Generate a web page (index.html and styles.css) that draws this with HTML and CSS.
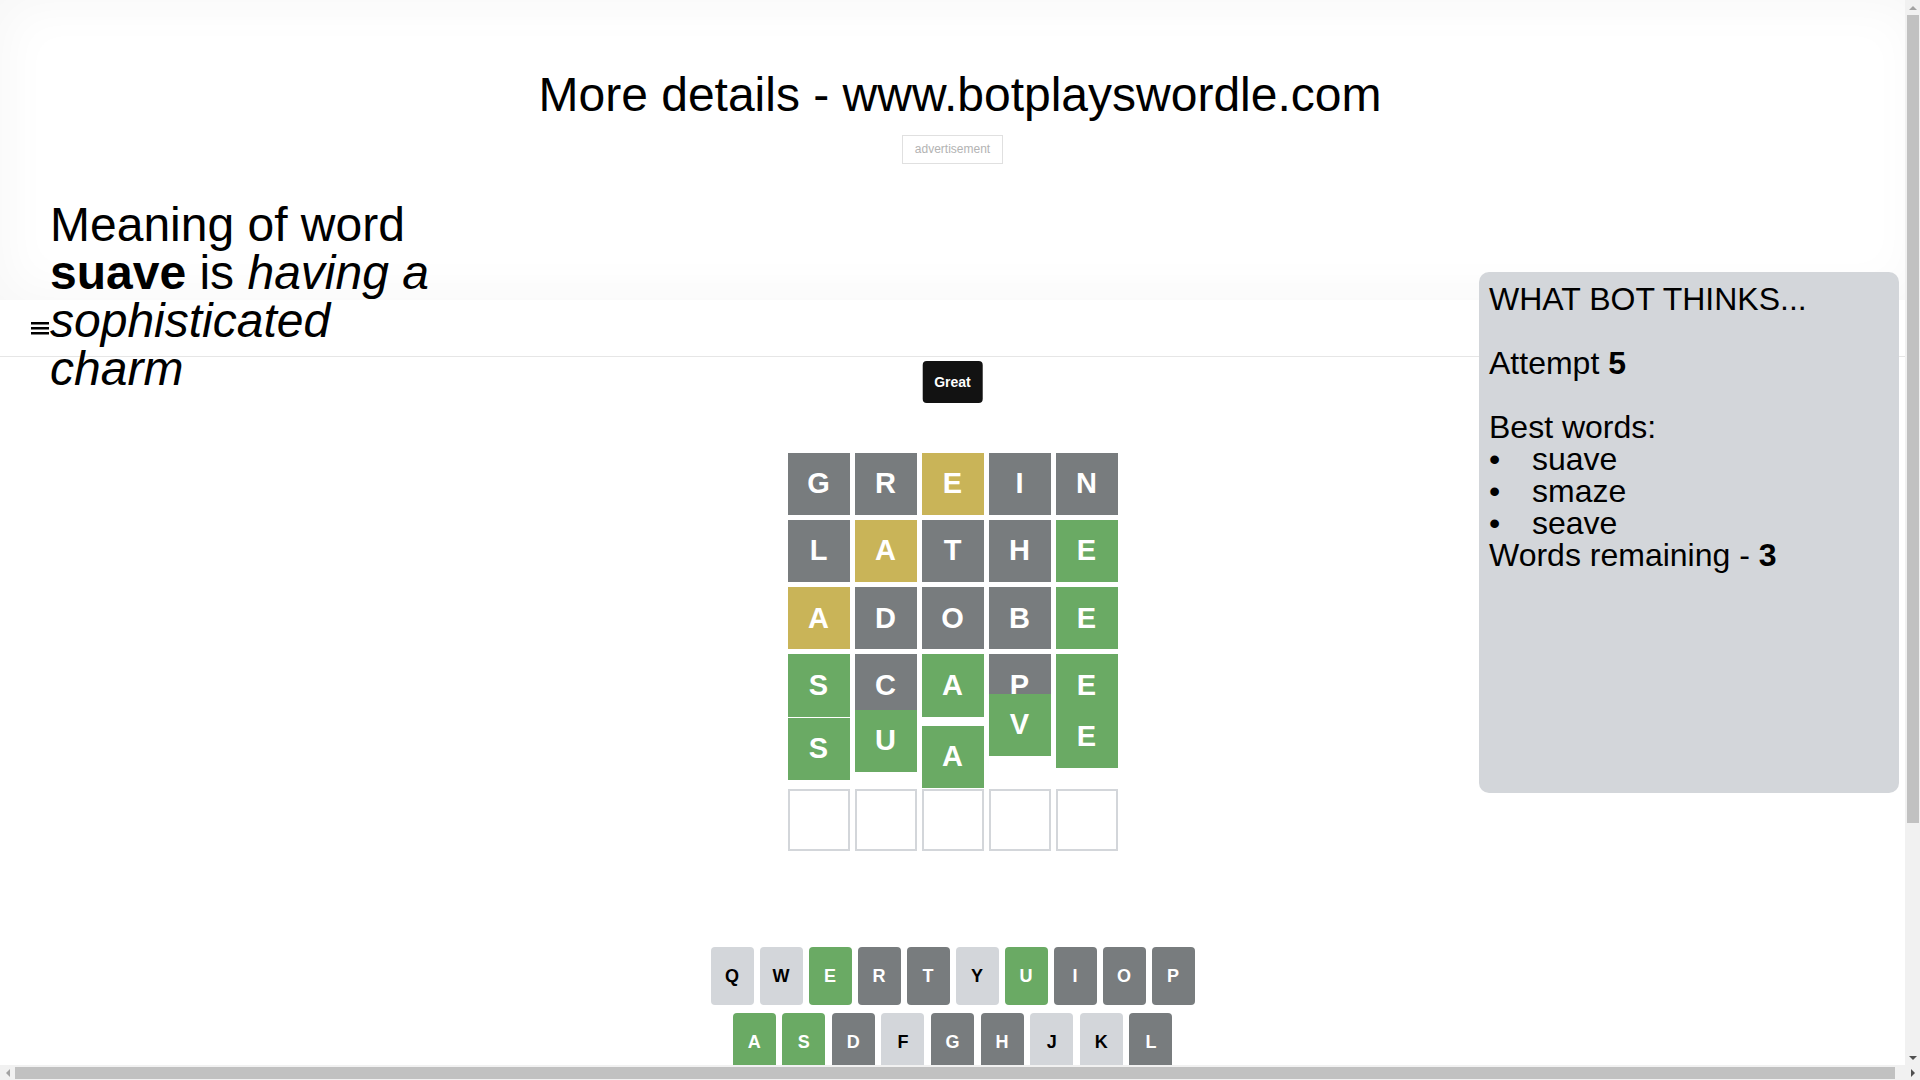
FILE: index.html
```html
<!DOCTYPE html>
<html lang="en">
<head>
  <meta charset="UTF-8">
  <title>Bot plays Wordle</title>
  <meta name="viewport" content="width=device-width, initial-scale=1.0">
  <link rel="stylesheet" href="styles.css">
</head>
<body>

  <div class="app">

    <div class="promo">
      <h1 class="promo-title">More details - www.botplayswordle.com</h1>
      <div class="ad-row"><span class="ad-label">advertisement</span></div>
    </div>

    <div class="meaning">
      Meaning of word <strong>suave</strong> is <em>having a sophisticated charm</em>
    </div>

    <header class="top-bar">
      <svg class="menu-icon" viewBox="0 0 18 13" aria-hidden="true">
        <rect x="0" y="0" width="18" height="2.5"/>
        <rect x="0" y="5" width="18" height="2.5"/>
        <rect x="0" y="10" width="18" height="2.5"/>
      </svg>
    </header>

    <div class="game">
      <div class="toast">Great</div>

      <div class="board-wrap">
        <div class="board">
          <div class="board-row">
            <div class="tile absent">G</div>
            <div class="tile absent">R</div>
            <div class="tile present">E</div>
            <div class="tile absent">I</div>
            <div class="tile absent">N</div>
          </div>
          <div class="board-row">
            <div class="tile absent">L</div>
            <div class="tile present">A</div>
            <div class="tile absent">T</div>
            <div class="tile absent">H</div>
            <div class="tile correct">E</div>
          </div>
          <div class="board-row">
            <div class="tile present">A</div>
            <div class="tile absent">D</div>
            <div class="tile absent">O</div>
            <div class="tile absent">B</div>
            <div class="tile correct">E</div>
          </div>
          <div class="board-row">
            <div class="tile correct">S</div>
            <div class="tile absent">C</div>
            <div class="tile correct">A</div>
            <div class="tile absent">P</div>
            <div class="tile correct">E</div>
          </div>
          <!-- last guess is mid-bounce -->
          <div class="board-row">
            <div class="tile correct" style="transform: translateY(-4px)">S</div>
            <div class="tile correct" style="transform: translateY(-12px)">U</div>
            <div class="tile correct" style="transform: translateY(4px)">A</div>
            <div class="tile correct" style="transform: translateY(-28px)">V</div>
            <div class="tile correct" style="transform: translateY(-16px)">E</div>
          </div>
          <div class="board-row">
            <div class="tile empty"></div>
            <div class="tile empty"></div>
            <div class="tile empty"></div>
            <div class="tile empty"></div>
            <div class="tile empty"></div>
          </div>
        </div>
      </div>

      <div class="keyboard">
        <div class="key-row">
          <div class="key">Q</div>
          <div class="key">W</div>
          <div class="key correct">E</div>
          <div class="key absent">R</div>
          <div class="key absent">T</div>
          <div class="key">Y</div>
          <div class="key correct">U</div>
          <div class="key absent">I</div>
          <div class="key absent">O</div>
          <div class="key absent">P</div>
        </div>
        <div class="key-row middle">
          <div class="key correct">A</div>
          <div class="key correct">S</div>
          <div class="key absent">D</div>
          <div class="key">F</div>
          <div class="key absent">G</div>
          <div class="key absent">H</div>
          <div class="key">J</div>
          <div class="key">K</div>
          <div class="key absent">L</div>
        </div>
        <div class="key-row">
          <div class="key wide">ENTER</div>
          <div class="key">Z</div>
          <div class="key">X</div>
          <div class="key absent">C</div>
          <div class="key correct">V</div>
          <div class="key absent">B</div>
          <div class="key absent">N</div>
          <div class="key">M</div>
          <div class="key wide">⌫</div>
        </div>
      </div>
    </div>

    <div class="bot-panel">
      WHAT BOT THINKS...<br><br>
      Attempt <b>5</b><br><br>
      Best words:
      <ul class="best-words">
        <li>suave</li>
        <li>smaze</li>
        <li>seave</li>
      </ul>
      Words remaining - <b>3</b>
    </div>

  </div>

  <div class="scrollbar-v">
    <div class="sb-arrow up"></div>
    <div class="sb-thumb"></div>
    <div class="sb-track"></div>
    <div class="sb-arrow down"></div>
  </div>

  <div class="scrollbar-h">
    <div class="sb-arrow left"></div>
    <div class="sb-thumb"></div>
    <div class="sb-arrow right"></div>
  </div>

</body>
</html>
```

FILE: styles.css
```css
* {
  box-sizing: border-box;
}

html, body {
  height: 100%;
  margin: 0;
}

body {
  display: grid;
  grid-template-columns: 1fr 15px;
  grid-template-rows: 1fr 15px;
  overflow: hidden;
  font-family: "Liberation Sans", Arial, sans-serif;
  color: #000;
  background-color: #ffffff;
}

.app {
  position: relative;
  min-width: 0;
  overflow: hidden;
}

/* top promo band */
.promo {
  width: calc(100% + 15px);
  height: 300px;
  background-color: #ffffff;
  box-shadow: inset 0 0 50px 6px rgba(0, 0, 0, 0.035);
  text-align: center;
}

.promo-title {
  margin: 0;
  padding-top: 67px;
  font-size: 48px;
  font-weight: normal;
  line-height: 56px;
}

.ad-row {
  margin: 12px 15px 0 0;
}

.ad-label {
  display: inline-block;
  padding: 6px 12px;
  border: 1px solid #e0e0e0;
  font-size: 12px;
  line-height: 15px;
  color: #b3b3b3;
}

.meaning {
  position: absolute;
  top: 201px;
  left: 50px;
  width: 420px;
  font-size: 48px;
  line-height: 48px;
  z-index: 2;
}

.top-bar {
  height: 57px;
  border-bottom: 1px solid #e6e6e6;
  display: flex;
  align-items: center;
  padding-left: 31px;
}

.menu-icon {
  width: 18px;
  height: 13px;
  fill: #000;
}

/* game */
.game {
  position: relative;
  padding-bottom: 227px;
}

.toast {
  position: absolute;
  top: 4px;
  left: 50%;
  transform: translateX(-50%);
  padding: 13px 12px;
  background-color: #121212;
  color: #fff;
  font-size: 14px;
  font-weight: bold;
  line-height: 16px;
  border-radius: 4px;
  z-index: 3;
}

.board-wrap {
  height: 590px;
  display: flex;
  align-items: center;
  justify-content: center;
}

.board {
  display: grid;
  grid-template-rows: repeat(6, 1fr);
  gap: 5px;
  width: 330px;
  height: 399px;
}

.board-row {
  display: grid;
  grid-template-columns: repeat(5, 1fr);
  gap: 5px;
}

.tile {
  display: flex;
  align-items: center;
  justify-content: center;
  font-size: 29px;
  font-weight: bold;
  color: #fff;
}

.tile.empty {
  border: 2px solid #d3d6da;
}

.keyboard {
  display: flex;
  flex-direction: column;
  align-items: center;
  gap: 8px;
}

.key-row {
  display: flex;
  gap: 6px;
}

.key-row.middle {
  gap: 6.6px;
}

.key {
  width: 43px;
  height: 58px;
  border-radius: 4px;
  display: flex;
  align-items: center;
  justify-content: center;
  font-size: 18px;
  font-weight: bold;
  background-color: #d3d6da;
  color: #000;
}

.key.wide {
  width: 65px;
  font-size: 12px;
}

.absent {
  background-color: #787c7e;
}

.present {
  background-color: #c9b458;
}

.correct {
  background-color: #6aaa64;
}

.key.absent,
.key.correct {
  color: #fff;
}

/* bot side panel */
.bot-panel {
  position: absolute;
  top: 272px;
  right: 6px;
  width: 420px;
  height: 521px;
  padding: 11px 10px;
  background-color: #d3d6da;
  border-radius: 10px;
  font-size: 32px;
  line-height: 32px;
  z-index: 2;
}

.best-words {
  margin: 0;
  padding: 0;
  list-style: none;
}

.best-words li::before {
  content: "•";
  display: inline-block;
  width: 43px;
}

/* window scrollbars */
.scrollbar-v {
  display: flex;
  flex-direction: column;
  background-color: #f1f1f1;
}

.scrollbar-h {
  grid-column: 1 / 3;
  display: flex;
  background-color: #f1f1f1;
}

.sb-arrow {
  flex: 0 0 15px;
  height: 15px;
  display: flex;
  align-items: center;
  justify-content: center;
}

.sb-arrow::before {
  content: "";
  border: 4px solid transparent;
}

.sb-arrow.up::before {
  border-top: 0;
  border-bottom-color: #a3a3a3;
}

.sb-arrow.down::before {
  border-bottom: 0;
  border-top-color: #505050;
}

.sb-arrow.left::before {
  border-left: 0;
  border-right-color: #a3a3a3;
}

.sb-arrow.right::before {
  border-right: 0;
  border-left-color: #505050;
}

.scrollbar-v .sb-thumb {
  height: 808px;
  margin: 0 1px 0 2px;
  background-color: #c1c1c1;
}

.sb-track {
  flex: 1;
}

.scrollbar-h .sb-thumb {
  flex: 1;
  margin: 2px 10px 1px 0;
  background-color: #c1c1c1;
}
```
